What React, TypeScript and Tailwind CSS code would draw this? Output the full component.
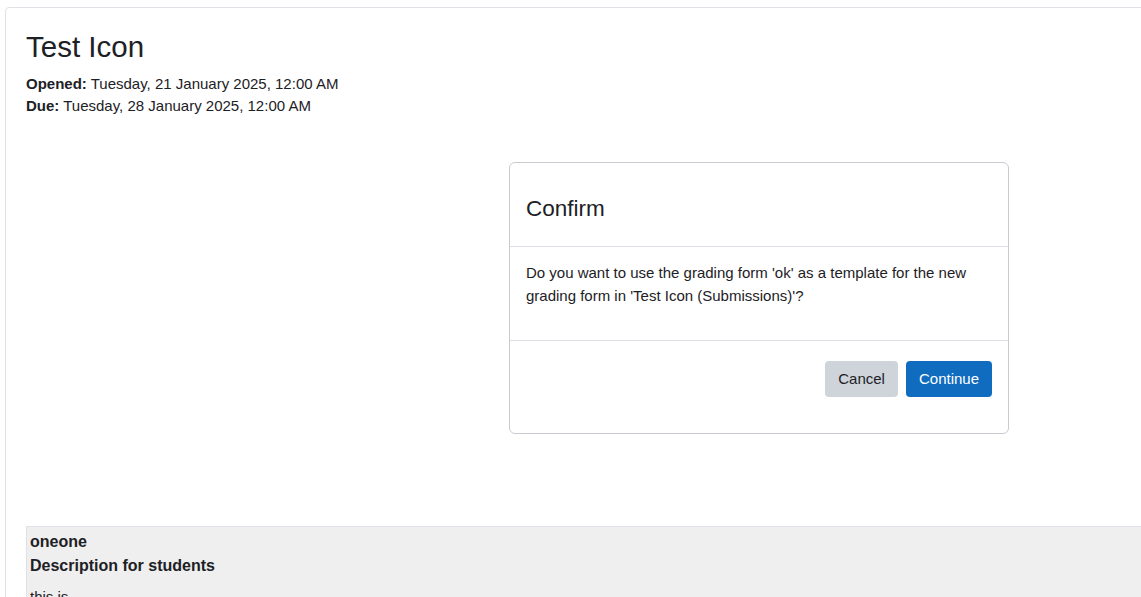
export default function App() {
  return (
    <div className="h-[597px] w-[1141px] overflow-hidden bg-white text-[#1d2125] font-['Liberation_Sans',Arial,sans-serif]">
      <div className="ml-[5px] mt-[7px] w-[1160px] min-h-[620px] rounded-tl-[4px] border border-[#dee2e6] pl-[20px] pt-[20px]">
        <h2 className="text-[29.5px] leading-[38px]">Test Icon</h2>
        <div className="mt-[7px] text-[15px] leading-[22px]">
          <div>
            <span className="font-bold">Opened:</span> Tuesday, 21 January 2025, 12:00 AM
          </div>
          <div>
            <span className="font-bold">Due:</span> Tuesday, 28 January 2025, 12:00 AM
          </div>
        </div>

        {/* confirm dialog */}
        <div className="ml-[483px] mt-[45px] w-[500px] rounded-[6px] border border-[#c8cbcf] bg-white">
          <div className="border-b border-[#dee2e6] px-[16px] pb-[21px] pt-[30px]">
            <h5 className="text-[22.5px] leading-[32px]">Confirm</h5>
          </div>
          <div className="h-[94px] border-b border-[#dee2e6] px-[16px] pt-[14px] text-[15px] leading-[23px]">
            Do you want to use the grading form 'ok' as a template for the new grading form in 'Test Icon (Submissions)'?
          </div>
          <div className="flex justify-end gap-[8px] px-[16px] pb-[36px] pt-[20px]">
            <button className="h-[36px] rounded-[4px] bg-[#ced4da] px-[13px] text-[15px] text-[#1d2125]">Cancel</button>
            <button className="h-[36px] rounded-[4px] bg-[#0f6cbf] px-[13px] text-[15px] text-white">Continue</button>
          </div>
        </div>

        <div className="mt-[92px] border-t border-l border-[#dee2e6] bg-[#efefef] px-[3px] pt-[4px]">
          <div className="text-[16px] font-bold leading-[22px]">oneone</div>
          <div className="text-[16px] font-bold leading-[26px]">Description for students</div>
          <p className="mt-[7px] text-[15px] leading-[22px]">this is</p>
        </div>
      </div>
    </div>
  )
}
